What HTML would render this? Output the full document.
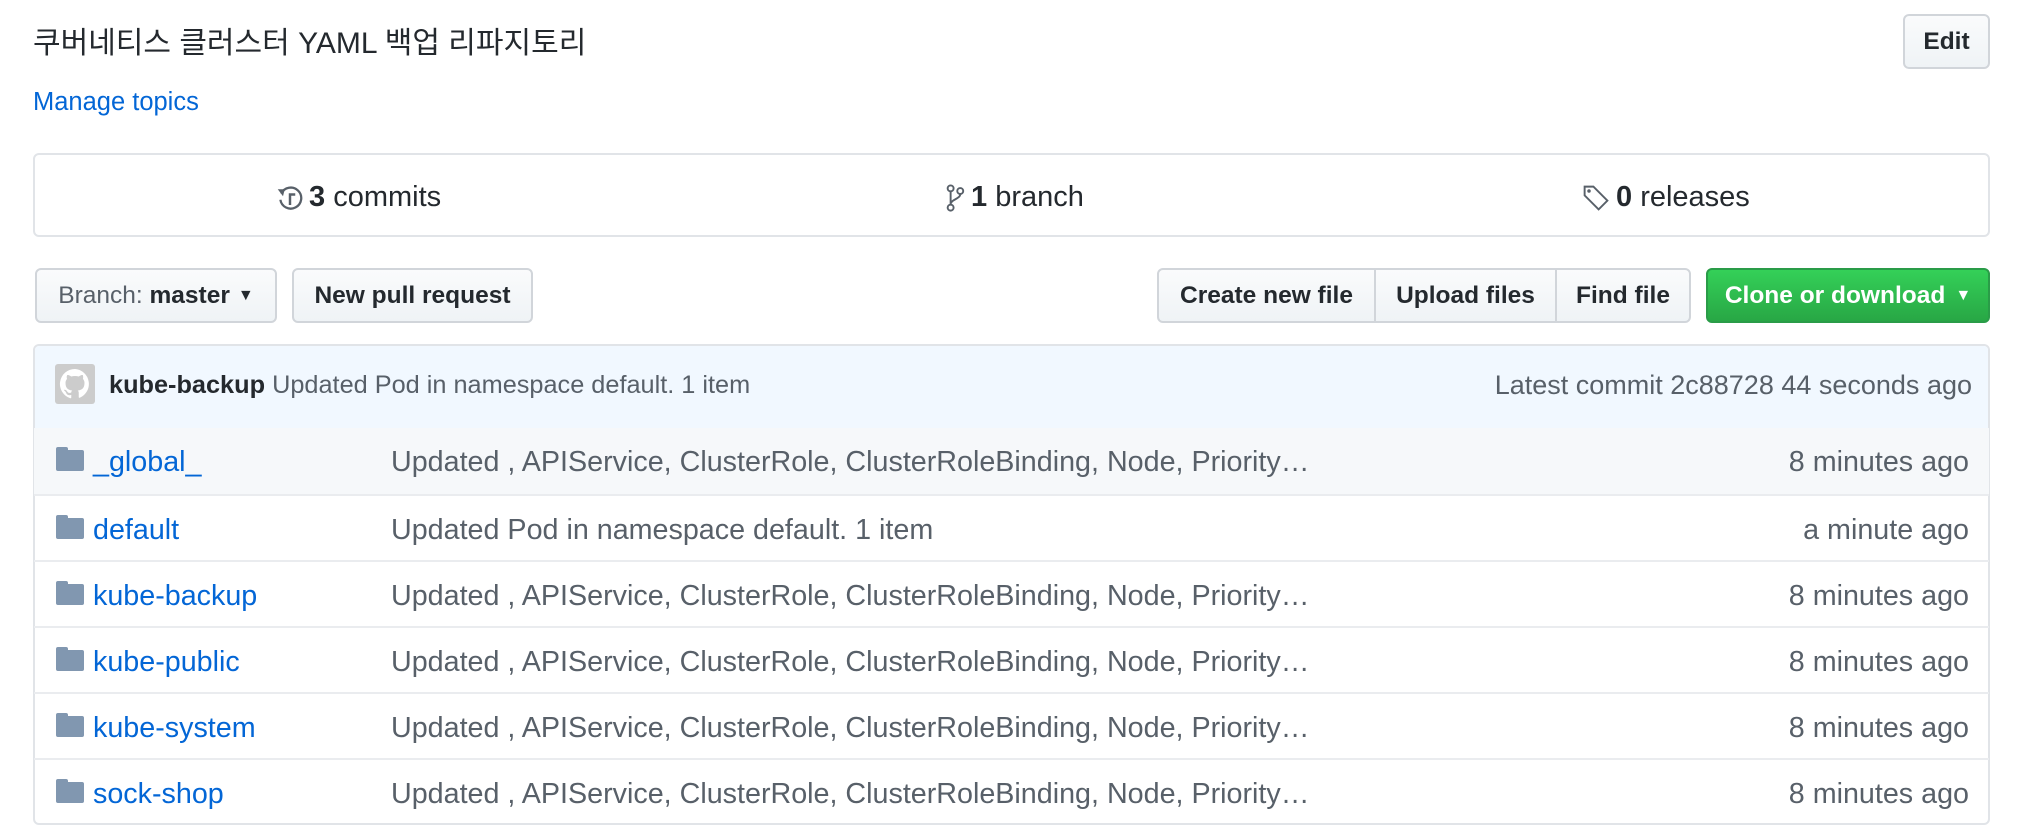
<!DOCTYPE html>
<html><head><meta charset="utf-8"><style>
*{box-sizing:border-box;margin:0;padding:0}
body{width:2020px;height:838px;background:#fff;font-family:"Liberation Sans","Noto Sans CJK KR",sans-serif;color:#24292e;position:relative;overflow:hidden}
.abs{position:absolute}
.btn{position:absolute;top:268px;height:55px;border:2px solid #d1d5da;border-radius:6px;background:linear-gradient(#fafbfc,#eff3f6);font-weight:bold;font-size:24.5px;display:flex;align-items:center;justify-content:center;color:#24292e}
.row{position:absolute;left:34px;width:1955px;height:66px;border-top:2px solid #eaecef;font-size:28.7px}
.row .ic{position:absolute;left:22px;top:22px;width:28px;height:21px;background:#8197b0;border-radius:2px}
.row .ic:before{content:"";position:absolute;left:0;top:-3px;width:12px;height:5px;background:#8197b0;border-radius:2px 2px 0 0}
.row .n{position:absolute;left:59px;top:18px;color:#0366d6}
.row .m{position:absolute;left:357px;top:18px;color:#586069}
.row .t{position:absolute;right:20px;top:18px;color:#586069}
</style></head><body>
<div class="abs" style="left:33px;top:18px;font-size:30px;color:#24292e">쿠버네티스 클러스터 YAML 백업 리파지토리</div>
<div class="btn" style="left:1903px;top:14px;width:87px;height:55px">Edit</div>
<div class="abs" style="left:33px;top:88px;font-size:25.5px;color:#0366d6">Manage topics</div>

<div class="abs" style="left:33px;top:153px;width:1957px;height:84px;border:2px solid #e1e4e8;border-radius:6px;font-size:29px;color:#24292e">
 <div class="abs" style="left:242px;top:26px;display:flex;align-items:center;gap:6px">
  <svg width="26" height="28" viewBox="0 0 14 16"><path fill="none" stroke="#586069" stroke-width="1.3" d="M2 5.5A6 6 0 1 1 1.5 9"/><path fill="#586069" d="M0 3l4 0-1 4z"/><path fill="none" stroke="#586069" stroke-width="1.4" d="M7 12V6h3"/></svg>
  <span><b>3</b> commits</span></div>
 <div class="abs" style="left:910px;top:26px;display:flex;align-items:center;gap:6px">
  <svg width="20" height="28" viewBox="0 0 10 16"><circle cx="2.5" cy="2.5" r="1.7" fill="none" stroke="#586069" stroke-width="1.1"/><circle cx="2.5" cy="13.5" r="1.7" fill="none" stroke="#586069" stroke-width="1.1"/><circle cx="8" cy="4" r="1.7" fill="none" stroke="#586069" stroke-width="1.1"/><path d="M2.5 4.2v7.6M8 5.7c0 3-5.5 3-5.5 6" fill="none" stroke="#586069" stroke-width="1.1"/></svg>
  <span><b>1</b> branch</span></div>
 <div class="abs" style="left:1547px;top:26px;display:flex;align-items:center;gap:6px">
  <svg width="28" height="28" viewBox="0 0 16 16"><path d="M1.5 1.5h5l8 8-5 5-8-8z" fill="none" stroke="#586069" stroke-width="1.1"/><circle cx="4" cy="4" r="1" fill="#586069"/></svg>
  <span><b>0</b> releases</span></div>
</div>

<div class="btn" style="left:35px;width:242px;font-weight:normal;color:#24292e"><span style="color:#586069">Branch:&nbsp;</span><b>master</b><span style="font-size:16px;margin-left:8px">▼</span></div>
<div class="btn" style="left:292px;width:241px">New pull request</div>
<div class="btn" style="left:1157px;width:219px;border-radius:6px 0 0 6px">Create new file</div>
<div class="btn" style="left:1374px;width:183px;border-radius:0">Upload files</div>
<div class="btn" style="left:1555px;width:136px;border-radius:0 6px 6px 0">Find file</div>
<div class="btn" style="left:1706px;width:284px;background:linear-gradient(#34d058,#28a745);border-color:#2a9c48;color:#fff">Clone or download<span style="font-size:16px;margin-left:10px">▼</span></div>

<div class="abs" style="left:33px;top:344px;width:1957px;height:481px;border:2px solid #e1e4e8;border-radius:6px;overflow:hidden">
 <div class="abs" style="left:0;top:0;width:1957px;height:84px;background:#f1f8ff;border-bottom:2px solid #c8e1ff;font-size:25.3px">
  <div class="abs" style="left:20px;top:18px;width:40px;height:40px;background:#ccc;border-radius:3px"><svg width="40" height="40" viewBox="0 0 16 16"><path fill="#fff" d="M8 2a6 6 0 0 0-1.9 11.7c.3 0 .4-.1.4-.3v-1c-1.7.4-2-.8-2-.8-.3-.7-.7-.9-.7-.9-.5-.4.1-.4.1-.4.6 0 .9.6.9.6.5.9 1.4.7 1.7.5 0-.4.2-.6.4-.8-1.3-.1-2.7-.7-2.7-3 0-.6.2-1.2.6-1.6 0-.2-.3-.8.1-1.6 0 0 .5-.2 1.6.6a5.6 5.6 0 0 1 3 0c1.1-.8 1.6-.6 1.6-.6.3.8.1 1.4.1 1.6.4.4.6 1 .6 1.6 0 2.3-1.4 2.9-2.7 3 .2.2.4.5.4 1v1.6c0 .2.1.3.4.3A6 6 0 0 0 8 2z"/></svg></div>
  <div class="abs" style="left:74px;top:25px"><b>kube-backup</b> <span style="color:#586069">Updated Pod in namespace default. 1 item</span></div>
  <div class="abs" style="right:20px;top:24px;color:#586069;font-size:27px">Latest commit 2c88728 44 seconds ago</div>
 </div>
</div>
<div class="row" style="top:428px;border-top:none;background:#f6f8fa;height:67px"><div class="ic"></div><div class="n">_global_</div><div class="m">Updated , APIService, ClusterRole, ClusterRoleBinding, Node, Priority…</div><div class="t">8 minutes ago</div></div>
<div class="row" style="top:494px"><div class="ic"></div><div class="n">default</div><div class="m">Updated Pod in namespace default. 1 item</div><div class="t">a minute ago</div></div>
<div class="row" style="top:560px"><div class="ic"></div><div class="n">kube-backup</div><div class="m">Updated , APIService, ClusterRole, ClusterRoleBinding, Node, Priority…</div><div class="t">8 minutes ago</div></div>
<div class="row" style="top:626px"><div class="ic"></div><div class="n">kube-public</div><div class="m">Updated , APIService, ClusterRole, ClusterRoleBinding, Node, Priority…</div><div class="t">8 minutes ago</div></div>
<div class="row" style="top:692px"><div class="ic"></div><div class="n">kube-system</div><div class="m">Updated , APIService, ClusterRole, ClusterRoleBinding, Node, Priority…</div><div class="t">8 minutes ago</div></div>
<div class="row" style="top:758px"><div class="ic"></div><div class="n">sock-shop</div><div class="m">Updated , APIService, ClusterRole, ClusterRoleBinding, Node, Priority…</div><div class="t">8 minutes ago</div></div>
</body></html>
